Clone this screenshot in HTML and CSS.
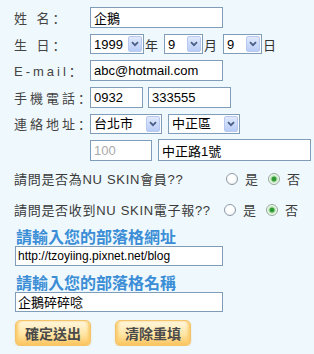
FILE: index.html
```html
<!DOCTYPE html>
<html>
  <head>
    <meta charset="utf-8" />
    <link rel="stylesheet" href="styles.css">
  </head>
  <body>
    <form class="form">
      <!-- 基本資料 -->
      <div class="fields">
        <div class="row">
          <span class="lbl">姓 名：</span>
          <input class="txt w-name" type="text" value="企鵝" />
        </div>

        <div class="row">
          <span class="lbl">生 日：</span>
          <span class="sel w-year">
            <select><option>1999</option></select>
            <span class="arrow"><svg width="8" height="6" viewBox="0 0 8 6"><path d="M1 1.2 L4 4.2 L7 1.2" fill="none" stroke="#4a5f86" stroke-width="1.8"/></svg></span>
          </span>
          <span class="unit">年</span>
          <span class="sel w-day">
            <select><option>9</option></select>
            <span class="arrow"><svg width="8" height="6" viewBox="0 0 8 6"><path d="M1 1.2 L4 4.2 L7 1.2" fill="none" stroke="#4a5f86" stroke-width="1.8"/></svg></span>
          </span>
          <span class="unit">月</span>
          <span class="sel w-day">
            <select><option>9</option></select>
            <span class="arrow"><svg width="8" height="6" viewBox="0 0 8 6"><path d="M1 1.2 L4 4.2 L7 1.2" fill="none" stroke="#4a5f86" stroke-width="1.8"/></svg></span>
          </span>
          <span class="unit">日</span>
        </div>

        <div class="row">
          <span class="lbl">E-mail：</span>
          <input class="txt w-name" type="text" value="abc@hotmail.com" />
        </div>

        <div class="row">
          <span class="lbl">手機電話：</span>
          <input class="txt w-pre" type="text" value="0932" />
          <input class="txt w-tel" type="text" value="333555" />
        </div>

        <div class="row">
          <span class="lbl">連絡地址：</span>
          <span class="sel w-city">
            <select><option>台北市</option></select>
            <span class="arrow"><svg width="8" height="6" viewBox="0 0 8 6"><path d="M1 1.2 L4 4.2 L7 1.2" fill="none" stroke="#4a5f86" stroke-width="1.8"/></svg></span>
          </span>
          <span class="sel w-city gap">
            <select><option>中正區</option></select>
            <span class="arrow"><svg width="8" height="6" viewBox="0 0 8 6"><path d="M1 1.2 L4 4.2 L7 1.2" fill="none" stroke="#4a5f86" stroke-width="1.8"/></svg></span>
          </span>
        </div>

        <div class="row indent">
          <input class="txt w-zip" type="text" value="100" readonly />
          <input class="txt w-addr" type="text" value="中正路1號" />
        </div>
      </div>

      <!-- 問題 -->
      <div class="question q1">
        <span class="q-text">請問是否為NU SKIN會員??</span>
        <span class="choices">
          <input type="radio" name="member" /><span class="opt">是</span>
          <input type="radio" name="member" checked /><span class="opt">否</span>
        </span>
      </div>
      <div class="question q2">
        <span class="q-text">請問是否收到NU SKIN電子報??</span>
        <span class="choices">
          <input type="radio" name="news" /><span class="opt">是</span>
          <input type="radio" name="news" checked /><span class="opt">否</span>
        </span>
      </div>

      <!-- 部落格 -->
      <div class="blog-title">請輸入您的部落格網址</div>
      <input class="txt w-blog url" type="text" value="http://tzoyiing.pixnet.net/blog" />
      <div class="blog-title second">請輸入您的部落格名稱</div>
      <input class="txt w-blog" type="text" value="企鵝碎碎唸" />

      <div class="buttons">
        <button type="button" class="btn">確定送出</button>
        <button type="button" class="btn">清除重填</button>
      </div>
    </form>
  </body>
</html>
```

FILE: styles.css
```css
body {
  margin: 0;
  background: #eff8fc;
  font-family: "Liberation Sans", "Noto Sans CJK TC", sans-serif;
  font-size: 13px;
  color: #3a3a3a;
}

.form {
  padding: 7px 0 0 14px;
}

/* 基本資料欄位 */
.fields {
  display: flex;
  flex-direction: column;
  gap: 5.5px;
}

.row {
  display: flex;
  align-items: center;
  height: 21px;
}

.row.indent {
  padding-left: 76px;
}

/* SC 字型的全形冒號靠左 */
.lbl {
  width: 76px;
  letter-spacing: 3px;
  color: #444;
  white-space: nowrap;
  font-family: "Liberation Sans", "Noto Sans CJK SC", sans-serif;
}

.txt {
  box-sizing: border-box;
  height: 21px;
  margin: 0;
  padding: 0 3px;
  border: 1px solid #7f9db9;
  background: #fff;
  color: #000;
  font: 13px "Liberation Sans", "Noto Sans CJK TC", sans-serif;
  outline: none;
}

.w-name {
  width: 133px;
}

.w-pre {
  width: 53px;
}

.w-tel {
  width: 83px;
  margin-left: 5px;
}

.w-zip {
  width: 62px;
  color: #aaa;
}

.w-addr {
  width: 153px;
  height: 22px;
  margin-left: 6px;
}

/* 下拉選單 */
.sel {
  position: relative;
  display: inline-block;
  height: 20px;
}

.sel select {
  box-sizing: border-box;
  width: 100%;
  height: 20px;
  margin: 0;
  padding: 0 0 0 3px;
  border: 1px solid #7f9db9;
  background: #fff;
  color: #000;
  font: 13px "Liberation Sans", "Noto Sans CJK TC", sans-serif;
  appearance: none;
  -webkit-appearance: none;
  outline: none;
}

.sel .arrow {
  position: absolute;
  top: 2px;
  right: 2px;
  bottom: 2px;
  width: 14px;
  display: flex;
  align-items: center;
  justify-content: center;
  background: linear-gradient(#e0e9fd, #b9cdf6);
  border: 1px solid #b7c9ef;
  border-radius: 2px;
  box-sizing: border-box;
  pointer-events: none;
}

.w-year {
  width: 54px;
}

.w-day {
  width: 39px;
}

.w-city {
  width: 72px;
}

.sel.gap {
  margin-left: 6px;
}

.unit {
  margin: 0 6px 0 1px;
  color: #333;
}

/* 是否問題 */
.question {
  display: flex;
  align-items: center;
  width: 286px;
  height: 20px;
  color: #3a3a3a;
}

.q-text {
  letter-spacing: 0.7px;
  white-space: nowrap;
}

.q1 {
  margin-top: 8px;
}

.q2 {
  width: 284px;
  margin-top: 11px;
}

.choices {
  display: flex;
  align-items: center;
  margin-left: auto;
}

.choices input {
  appearance: none;
  -webkit-appearance: none;
  width: 12px;
  height: 12px;
  margin: 0 7px 0 0;
  border: 1px solid #8d9aa6;
  border-radius: 50%;
  background: radial-gradient(circle at 40% 35%, #fff 40%, #e3e6e8);
}

.choices input:checked {
  border-color: #93a89a;
  background: radial-gradient(circle, #2f9a34 0 2px, #a9dca4 2.8px, #f2faf1 4.5px);
}

.choices .opt {
  margin-right: 10px;
}

.choices .opt:last-child {
  margin-right: 0;
}

/* 部落格 */
.blog-title {
  margin: 10px 0 0 2px;
  height: 16px;
  line-height: 16px;
  font-size: 16px;
  font-weight: bold;
  color: #3b8ed6;
  white-space: nowrap;
}

.blog-title.second {
  margin-top: 10px;
}

.w-blog {
  display: block;
  width: 208px;
  margin-left: 1px;
  height: 20px;
  padding: 0 2px;
}

.w-blog.url {
  font-size: 12px;
  height: 20px;
}

.buttons {
  display: flex;
  gap: 24px;
  margin: 8px 0 0 1px;
}

.btn {
  width: 76px;
  height: 26px;
  padding: 0;
  border: 1px solid #f4c46c;
  border-radius: 5px;
  background: linear-gradient(#fff7df, #ffe6a6 55%, #fcc45e);
  box-shadow: inset 3px 0 3px -1px #fbca6a, inset -3px 0 3px -1px #fbca6a, 0 1px 2px #e6dcc6;
  color: #4a4a4a;
  font: bold 14px "Noto Sans CJK TC", sans-serif;
  cursor: pointer;
}
```
